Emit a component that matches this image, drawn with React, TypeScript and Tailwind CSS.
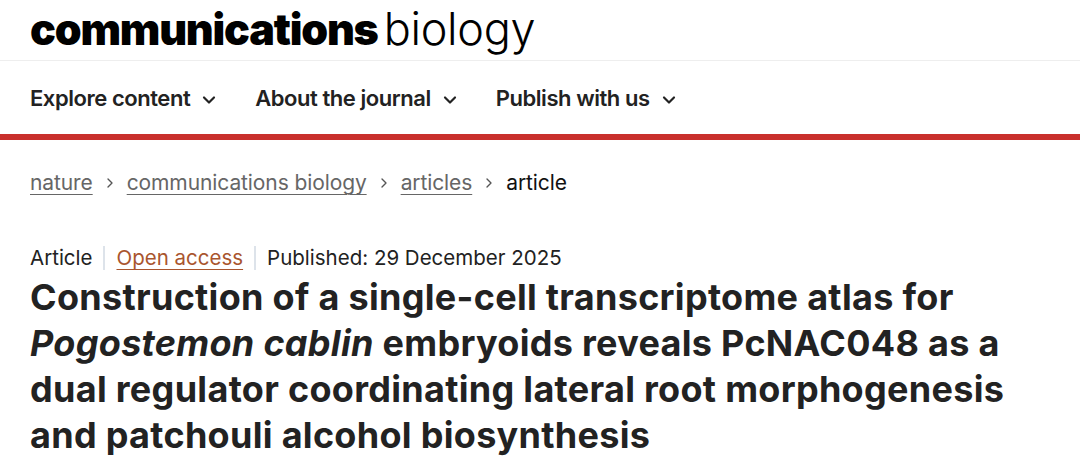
import { ChevronDown, ChevronRight } from "lucide-react";

const navItems = ["Explore content", "About the journal", "Publish with us"];

const crumbs = [
    { label: "nature", link: true },
    { label: "communications biology", link: true },
    { label: "articles", link: true },
    { label: "article", link: false },
];

export default function App() {
    return (
        <div className="h-[459px] w-[1080px] overflow-hidden bg-white text-[#222] [font-family:Inter,'Noto_Sans',sans-serif]">
            {/* journal logo */}
            <header className="flex h-[61px] items-start border-b border-[#eeeeee] pl-[30px] pt-[3px]">
                <h1 className="flex items-baseline leading-[52px] text-black">
                    <span className="text-[43px] font-black tracking-[-1.2px]">communications</span>
                    <span className="ml-[6px] text-[45px] font-light tracking-[-0.3px]">biology</span>
                </h1>
            </header>

            {/* main nav */}
            <nav className="flex h-[73px] items-center gap-[36px] pl-[30px] pt-[2px]">
                {navItems.map((item) => (
                    <button
                        key={item}
                        type="button"
                        className="flex items-center gap-[9px] text-[22px] font-semibold tracking-[-0.45px] text-[#222]"
                    >
                        {item}
                        <ChevronDown size={20} strokeWidth={2.6} className="mt-[2px]" />
                    </button>
                ))}
            </nav>
            <div className="h-[6px] bg-[#c9302c]" />

            {/* breadcrumbs */}
            <ol className="mt-[30px] flex items-center pl-[30px] text-[21px] leading-[26px] tracking-[-0.1px]">
                {crumbs.map((c, i) => (
                    <li key={c.label} className="flex items-center">
                        {c.link ? (
                            <a className="text-[#666] underline decoration-[1px] underline-offset-[4px]">{c.label}</a>
                        ) : (
                            <span className="text-[#111]">{c.label}</span>
                        )}
                        {i < crumbs.length - 1 && (
                            <ChevronRight size={16} strokeWidth={2} className="mx-[9px] text-[#555]" />
                        )}
                    </li>
                ))}
            </ol>

            {/* article meta */}
            <ul className="mt-[49px] flex items-center pl-[30px] text-[20.5px] leading-[26px] text-[#222]">
                <li>Article</li>
                <li className="mx-[11px] h-[24px] w-[2px] bg-[#dde3ea]" />
                <li>
                    <a className="text-[#a9552e] underline decoration-[1px] underline-offset-[4px]">Open access</a>
                </li>
                <li className="mx-[11px] h-[24px] w-[2px] bg-[#dde3ea]" />
                <li>Published: 29 December 2025</li>
            </ul>

            {/* title */}
            <h2 className="mt-[3px] pl-[30px] pr-[20px] text-[36px] font-bold leading-[46px] tracking-[0.3px] text-[#222]">
                Construction of a single-cell transcriptome atlas for
                <br />
                <i>Pogostemon cablin</i> embryoids reveals PcNAC048 as a
                <br />
                dual regulator coordinating lateral root morphogenesis
                <br />
                and patchouli alcohol biosynthesis
            </h2>
        </div>
    );
}
